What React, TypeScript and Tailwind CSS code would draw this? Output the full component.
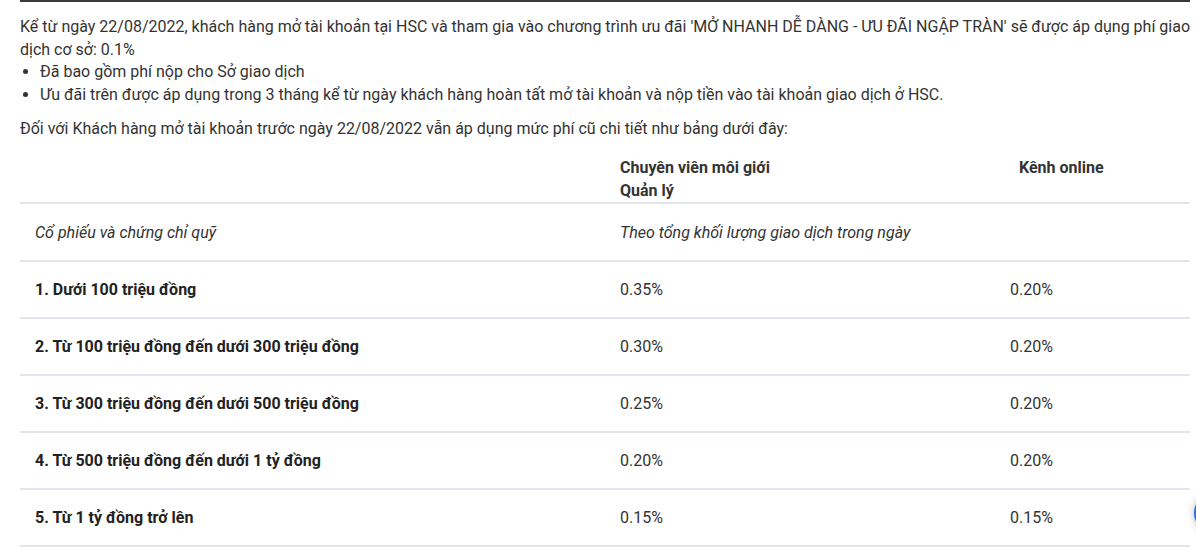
import React from "react";

const ROWS = [
  { label: "1. Dưới 100 triệu đồng", broker: "0.35%", online: "0.20%" },
  { label: "2. Từ 100 triệu đồng đến dưới 300 triệu đồng", broker: "0.30%", online: "0.20%" },
  { label: "3. Từ 300 triệu đồng đến dưới 500 triệu đồng", broker: "0.25%", online: "0.20%" },
  { label: "4. Từ 500 triệu đồng đến dưới 1 tỷ đồng", broker: "0.20%", online: "0.20%" },
  { label: "5. Từ 1 tỷ đồng trở lên", broker: "0.15%", online: "0.15%" },
];

export default function App() {
  return (
    <div
      className="relative h-[550px] w-[1196px] overflow-hidden bg-white text-[16px] leading-[22.5px] text-[#333]"
      style={{ fontFamily: "Roboto, 'Noto Sans', sans-serif" }}
    >
      <div className="ml-5 w-[1170px]">
        <div className="h-[2px] bg-[#3a3a3a]" />

        <p className="mt-[14px]">
          Kể từ ngày 22/08/2022, khách hàng mở tài khoản tại HSC và tham gia vào chương trình ưu đãi 'MỞ NHANH DỄ DÀNG - ƯU ĐÃI NGẬP TRÀN' sẽ được áp dụng phí giao dịch cơ sở: 0.1%
        </p>
        <ul className="list-disc pl-5">
          <li>Đã bao gồm phí nộp cho Sở giao dịch</li>
          <li>Ưu đãi trên được áp dụng trong 3 tháng kể từ ngày khách hàng hoàn tất mở tài khoản và nộp tiền vào tài khoản giao dịch ở HSC.</li>
        </ul>
        <p className="mt-3">
          Đối với Khách hàng mở tài khoản trước ngày 22/08/2022 vẫn áp dụng mức phí cũ chi tiết như bảng dưới đây:
        </p>

        <table className="mt-[15px] w-[1170px] table-fixed border-collapse leading-[23px]">
          <colgroup>
            <col className="w-[585px]" />
            <col className="w-[390px]" />
            <col className="w-[195px]" />
          </colgroup>
          <thead>
            <tr className="border-b-2 border-[#e1e5ee] align-top">
              <th />
              <th className="pl-[15px] text-left font-bold text-[#333]">
                Chuyên viên môi giới
                <br />
                Quản lý
              </th>
              <th className="pl-6 text-left font-bold text-[#333]">Kênh online</th>
            </tr>
          </thead>
          <tbody>
            <tr className="border-b-2 border-[#e1e5ee]">
              <td className="px-[15px] pt-[17px] pb-4 italic">Cổ phiếu và chứng chỉ quỹ</td>
              <td className="px-[15px] pt-[17px] pb-4 italic">Theo tổng khối lượng giao dịch trong ngày</td>
              <td className="px-[15px] pt-[17px] pb-4" />
            </tr>
            {ROWS.map((r) => (
              <tr key={r.label} className="border-b-2 border-[#e1e5ee]">
                <td className="px-[15px] py-4 font-bold text-[#222]">{r.label}</td>
                <td className="px-[15px] py-4">{r.broker}</td>
                <td className="px-[15px] py-4">{r.online}</td>
              </tr>
            ))}
          </tbody>
        </table>
      </div>

      {/* floating button peeking in from the right edge */}
      <div className="absolute left-[1194px] top-[493px] h-10 w-10 rounded-full bg-[#1f6fd6] shadow-[0_0_8px_rgba(0,0,0,0.25)]" />
    </div>
  );
}
